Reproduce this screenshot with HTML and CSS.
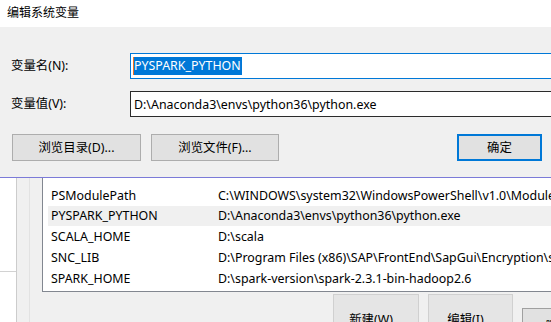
FILE: index.html
```html
<!DOCTYPE html>
<html lang="zh">
<head>
<meta charset="utf-8">
<title>编辑系统变量</title>
<link rel="stylesheet" href="styles.css">
</head>
<body>
<div class="window">
  <div class="titlebar">编辑系统变量</div>
  <div class="dialog">
    <div class="field">
      <span class="label">变量名(N):</span>
      <div class="input input-focus"><span class="sel">PYSPARK_PYTHON</span></div>
    </div>
    <div class="field">
      <span class="label">变量值(V):</span>
      <div class="input input-hover">D:\Anaconda3\envs\python36\python.exe</div>
    </div>
    <div class="btnrow">
      <div class="btn btn-dir">浏览目录(D)...</div>
      <div class="btn btn-file">浏览文件(F)...</div>
      <div class="btn btn-ok">确定</div>
    </div>
  </div>
  <div class="parent">
    <div class="pane-a"><div class="pane-a-top"></div></div>
    <div class="pane-b"></div>
    <div class="pane-c">
      <div class="list">
        <div class="rows">
          <div class="row row-clip"><span class="c1">PROCESSOR_REVISION</span><span class="c2">5e03</span></div>
          <div class="row"><span class="c1">PSModulePath</span><span class="c2">C:\WINDOWS\system32\WindowsPowerShell\v1.0\Modules\</span></div>
          <div class="row row-sel"><span class="c1">PYSPARK_PYTHON</span><span class="c2">D:\Anaconda3\envs\python36\python.exe</span></div>
          <div class="row"><span class="c1">SCALA_HOME</span><span class="c2">D:\scala</span></div>
          <div class="row"><span class="c1">SNC_LIB</span><span class="c2">D:\Program Files (x86)\SAP\FrontEnd\SapGui\Encryption\sapcrypto.dll</span></div>
          <div class="row"><span class="c1">SPARK_HOME</span><span class="c2">D:\spark-version\spark-2.3.1-bin-hadoop2.6</span></div>
        </div>
      </div>
      <div class="actions">
        <div class="pbtn pbtn-new">新建(W)...</div>
        <div class="pbtn pbtn-edit">编辑(I)...</div>
        <div class="pbtn pbtn-del">删除(L)</div>
      </div>
    </div>
  </div>
</div>
</body>
</html>
```

FILE: styles.css
```css
* { box-sizing: border-box; }
html, body {
  margin: 0;
  padding: 0;
  width: 551px;
  height: 322px;
  overflow: hidden;
  background: #ffffff;
}
body {
  font-family: "Noto Sans", "Noto Sans CJK SC", sans-serif;
  font-size: 12.4px;
  color: #000;
}
.window {
  width: 551px;
  height: 322px;
  overflow: hidden;
}
.titlebar {
  height: 27px;
  background: #fff;
  padding-left: 7px;
  line-height: 25px;
  font-size: 12px;
}
.dialog {
  height: 151px;
  background: #f0f0f0;
  border-bottom: 1px solid #7b7ad8;
  padding: 26px 0 0 11px;
}
.field {
  display: flex;
  align-items: center;
  height: 26px;
}
.field + .field { margin-top: 12px; }
.label {
  width: 119px;
  flex: none;
  line-height: 16px;
}
.input {
  flex: none;
  width: 440px;
  height: 26px;
  background: #fff;
  padding-left: 3px;
  display: flex;
  align-items: center;
  white-space: nowrap;
}
.input-focus { border: 1px solid #0078d7; }
.input-hover { border: 1px solid #2b2b2b; }
.sel {
  background: #0078d7;
  color: #fff;
  height: 18px;
  line-height: 18px;
  padding-right: 1px;
  border-left: 1px solid #f07020;
  margin-left: -1px;
}
.btnrow {
  display: flex;
  margin-top: 17px;
  height: 27px;
}
.btn {
  height: 27px;
  background: #e1e1e1;
  border: 1px solid #adadad;
  display: flex;
  align-items: center;
  justify-content: center;
  line-height: 16px;
}
.btn-dir { width: 129px; margin-left: 1px; }
.btn-file { width: 128px; margin-left: 10px; }
.btn-ok {
  width: 85px;
  margin-left: auto;
  margin-right: 9px;
  border: 2px solid #0078d7;
}
.parent {
  display: flex;
  height: 144px;
}
.pane-a {
  width: 17px;
  flex: none;
  background: #fff;
  border-right: 1px solid #cccccc;
}
.pane-a-top {
  height: 94px;
  border-bottom: 1px solid #d2d2d2;
}
.pane-b {
  width: 13px;
  flex: none;
  background: #f0f0f0;
  border-right: 1px solid #e2e2e2;
}
.pane-c {
  flex: 1;
  background: #f0f0f0;
  padding-left: 12px;
  display: flex;
  flex-direction: column;
  min-width: 0;
}
.list {
  flex: none;
  height: 114px;
  width: 560px;
  background: #fff;
  border-left: 1px solid #828790;
  border-bottom: 1px solid #828790;
  overflow: hidden;
  padding-left: 5px;
}
.rows { margin-top: -14px; }
.row {
  display: flex;
  align-items: center;
  height: 20.75px;
  white-space: nowrap;
}
.row-clip {
  align-items: flex-start;
  line-height: 15px;
}
.row-sel { background: #f0f0f0; }
.c1 {
  width: 170px;
  flex: none;
  padding-left: 3px;
}
.c2 { flex: none; }
.actions {
  flex: none;
  display: flex;
  align-items: flex-start;
  padding-left: 291px;
  margin-top: 2px;
}
.pbtn {
  flex: none;
  height: 40px;
  background: #e5e5e5;
  border: 1px solid #d0d0d0;
  text-align: center;
  padding-top: 17px;
  line-height: 16px;
  white-space: nowrap;
}
.pbtn-new { width: 86px; }
.pbtn-edit { width: 85px; margin-left: 9px; }
.pbtn-del {
  width: 85px;
  margin-left: 9px;
  margin-top: 14px;
  background: #e1e1e1;
  border-color: #a0a0a0;
  padding-top: 10px;
}
```
